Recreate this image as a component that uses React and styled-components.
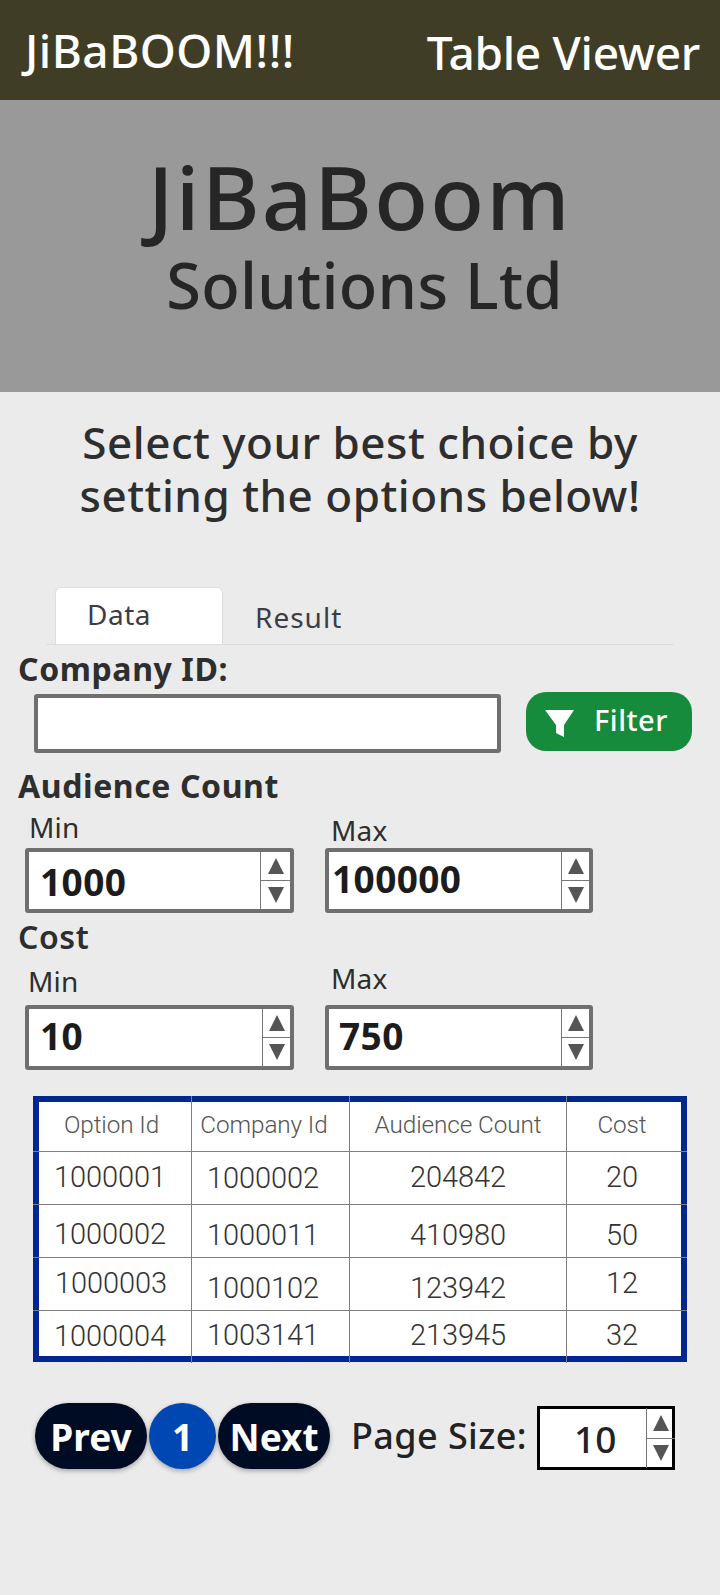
import React from 'react';
import styled, { createGlobalStyle } from 'styled-components';

const GlobalStyle = createGlobalStyle`
  html, body {
    margin: 0;
    padding: 0;
    background: #ebebeb;
  }
  body {
    font-family: "Noto Sans", "Open Sans", sans-serif;
    color: #2e2e2e;
  }
`;

const Page = styled.div`
  width: 720px;
  height: 1595px;
  overflow: hidden;
  background: #ebebeb;
`;

const TopBar = styled.div`
  display: flex;
  align-items: center;
  justify-content: space-between;
  height: 100px;
  padding: 0 20px 0 25px;
  box-sizing: border-box;
  background: #403d26;
  color: #ffffff;
`;

const Brand = styled.div`
  font-size: 46px;
  font-weight: 500;
  letter-spacing: 0.5px;
`;

const PageName = styled.div`
  font-size: 46px;
  font-weight: 500;
  letter-spacing: -0.3px;
  margin-top: 3px;
`;

const Hero = styled.div`
  display: flex;
  flex-direction: column;
  align-items: center;
  height: 292px;
  padding-top: 44px;
  box-sizing: border-box;
  background: #999999;
  color: #262626;
`;

const HeroTitle = styled.div`
  font-size: 88px;
  line-height: 105px;
  font-weight: 500;
  letter-spacing: 2.3px;
`;

const HeroSub = styled.div`
  margin-left: 9px;
  font-size: 63px;
  line-height: 72px;
  font-weight: 500;
  letter-spacing: 0.3px;
`;

const Lead = styled.div`
  margin-top: 24px;
  text-align: center;
  font-size: 44px;
  line-height: 53px;
  font-weight: 500;
  letter-spacing: 0.5px;
`;

const Tabs = styled.div`
  display: flex;
  height: 57px;
  margin: 65px 46px 0;
  padding-left: 9px;
  border-bottom: 1px solid #dddddd;
`;

const Tab = styled.div`
  box-sizing: border-box;
  width: ${(p) => p.$width}px;
  height: 57px;
  padding: ${(p) => p.$top}px 0 0 ${(p) => p.$left}px;
  font-size: 28px;
  line-height: 38px;
  font-weight: 400;
  letter-spacing: ${(p) => p.$spacing}px;
  color: #3c3c44;
  ${(p) => p.$active && `
    background: #ffffff;
    border: 1px solid #dddddd;
    border-bottom: none;
    border-radius: 6px 6px 0 0;
  `}
`;

const GroupLabel = styled.div`
  height: ${(p) => p.$height}px;
  padding-top: ${(p) => p.$top || 0}px;
  padding-left: 18px;
  font-size: 32px;
  line-height: ${(p) => p.$height}px;
  font-weight: ${(p) => p.$weight || 700};
  letter-spacing: 0.6px;
`;

const CompanyRow = styled.div`
  display: flex;
  align-items: flex-start;
  padding-left: 34px;
`;

const TextBox = styled.input`
  box-sizing: border-box;
  width: 467px;
  height: 59px;
  margin-top: 2px;
  padding: 0 8px;
  border: 4px solid #6f6f6f;
  border-radius: 3px;
  background: #ffffff;
  outline: none;
`;

const FilterButton = styled.button`
  display: flex;
  align-items: center;
  box-sizing: border-box;
  width: 166px;
  height: 59px;
  margin-left: 25px;
  padding: 0 0 4px 19px;
  border: none;
  border-radius: 20px;
  background: #168b3c;
  color: #ffffff;
  font-family: inherit;
  font-size: 29px;
  font-weight: 500;
  letter-spacing: 0.5px;
`;

const FilterIcon = styled.svg`
  width: 29px;
  height: 27px;
  margin: 8px 20px 0 0;
  fill: #ffffff;
`;

const RangeRow = styled.div`
  display: flex;
  align-items: flex-end;
  gap: 31px;
  height: ${(p) => p.$height}px;
  padding-left: 25px;
`;

const Field = styled.div`
  display: flex;
  flex-direction: column;
  width: ${(p) => p.$width}px;
`;

const FieldLabel = styled.div`
  height: 34px;
  margin-left: ${(p) => p.$left}px;
  margin-bottom: ${(p) => p.$gap}px;
  font-size: 28px;
  line-height: 34px;
  letter-spacing: 0.2px;
`;

const SpinBox = styled.div`
  display: flex;
  box-sizing: border-box;
  height: 65px;
  border: 4px solid #6f6f6f;
  border-radius: 3px;
  background: #ffffff;
`;

const SpinValue = styled.div`
  flex: 1;
  padding: ${(p) => p.$top}px 0 0 ${(p) => p.$left}px;
  font-size: 37px;
  line-height: 48px;
  font-weight: 700;
  letter-spacing: 0.4px;
  color: #1c1c1c;
`;

const Spinner = styled.div`
  display: flex;
  flex-direction: column;
  box-sizing: border-box;
  width: ${(p) => p.$width}px;
  border-left: 1px solid #777777;
`;

const SpinPart = styled.div`
  flex: 1;
  display: flex;
  align-items: center;
  justify-content: center;
  ${(p) => p.$up && 'border-bottom: 1px solid #777777;'}
`;

const Arrow = styled.div`
  width: 0;
  height: 0;
  border-left: 8px solid transparent;
  border-right: 8px solid transparent;
  ${(p) => (p.$up ? 'border-bottom: 16px solid #555555;' : 'border-top: 16px solid #555555;')}
`;

const Table = styled.div`
  box-sizing: border-box;
  width: 654px;
  height: 266px;
  margin: 26px 0 0 33px;
  border: 6px solid #00268f;
  background: #ffffff;
  font-family: Roboto, "Liberation Sans", sans-serif;
  font-weight: 300;
`;

const Row = styled.div`
  position: relative;
  display: grid;
  grid-template-columns: 153px 158px 217px 114px;
  height: ${(p) => p.$height}px;
  ${(p) => !p.$last && `
    &::after {
      content: "";
      position: absolute;
      left: -6px;
      right: -6px;
      bottom: 0;
      height: 1px;
      background: #808080;
    }
  `}
`;

const Cell = styled.div`
  position: relative;
  display: flex;
  align-items: center;
  justify-content: ${(p) => (p.$left ? 'flex-start' : 'center')};
  box-sizing: border-box;
  padding-left: ${(p) => p.$left || 0}px;
  padding-right: ${(p) => p.$right || 0}px;
  padding-top: ${(p) => (p.$dy > 0 ? p.$dy * 2 : 0)}px;
  padding-bottom: ${(p) => (p.$dy < 0 ? -p.$dy * 2 : 0)}px;
  font-size: 29px;
  letter-spacing: -0.1px;
  color: #333333;
  &:not(:last-child) {
    border-right: 1px solid #808080;
  }
  &:not(:last-child)::after {
    content: "";
    position: absolute;
    right: -1px;
    width: 1px;
    background: #808080;
    ${(p) => p.$edge === 'top' && 'top: -6px; height: 6px;'}
    ${(p) => p.$edge === 'bottom' && 'bottom: -6px; height: 6px;'}
  }
`;

const HeadCell = styled(Cell)`
  font-size: 24.3px;
  color: #555555;
`;

const Pagination = styled.div`
  display: flex;
  align-items: flex-start;
  margin: 41px 0 0 35px;
`;

const PageButton = styled.button`
  box-sizing: border-box;
  width: ${(p) => p.$width}px;
  height: 66px;
  margin-right: 2px;
  padding: 0;
  border: none;
  border-radius: 33px;
  background: ${(p) => (p.$active ? '#0047b3' : '#000c24')};
  box-shadow: 0 2px 5px rgba(0, 0, 0, 0.3);
  color: #ffffff;
  font-family: inherit;
  font-size: 37px;
  font-weight: 700;
`;

const PageSizeLabel = styled.div`
  margin-left: 19px;
  height: 66px;
  font-size: 36px;
  line-height: 66px;
  font-weight: 500;
  letter-spacing: 0.4px;
  color: #222222;
`;

const PageSizeBox = styled(SpinBox)`
  width: 138px;
  height: 64px;
  margin: 3px 0 0 10px;
  border: 3px solid #000000;
  border-radius: 0;
`;

const PageSizeValue = styled.div`
  flex: 1;
  padding-left: 34px;
  font-size: 37px;
  line-height: 60px;
  font-weight: 500;
  color: #222222;
`;

const PageSizeSpinner = styled(Spinner)`
  margin: -1px -3px -1px 0;
`;

const columns = [
  { name: 'Option Id', right: 7 },
  { name: 'Company Id', right: 13 },
  { name: 'Audience Count', right: 0 },
  { name: 'Cost', right: 4 },
];

const rows = [
  { height: 53, cells: [['1000001', 15, -2], ['1000002', 15, -1], ['204842', 0, -2], ['20', 0, -2]] },
  { height: 53, cells: [['1000002', 15, 2], ['1000011', 15, 3], ['410980', 0, 3], ['50', 0, 3]] },
  { height: 53, cells: [['1000003', 16, -2], ['1000102', 15, 3], ['123942', 0, 3], ['12', 0, -2]] },
  { height: 46, cells: [['1000004', 15, 2], ['1003141', 15, 1], ['213945', 0, 1], ['32', 0, 1]] },
];

function NumberField({ width = 269, label, labelLeft, labelGap, value, valueLeft, valueTop, spinWidth }) {
  return (
    <Field $width={width}>
      <FieldLabel $left={labelLeft} $gap={labelGap}>{label}</FieldLabel>
      <SpinBox>
        <SpinValue $left={valueLeft} $top={valueTop}>{value}</SpinValue>
        <Spinner $width={spinWidth}>
          <SpinPart $up><Arrow $up /></SpinPart>
          <SpinPart><Arrow /></SpinPart>
        </Spinner>
      </SpinBox>
    </Field>
  );
}

export default function App() {
  return (
    <Page>
      <GlobalStyle />
      <TopBar>
        <Brand>JiBaBOOM!!!</Brand>
        <PageName>Table Viewer</PageName>
      </TopBar>
      <Hero>
        <HeroTitle>JiBaBoom</HeroTitle>
        <HeroSub>Solutions Ltd</HeroSub>
      </Hero>
      <Lead>
        Select your best choice by
        <br />
        setting the options below!
      </Lead>
      <Tabs>
        <Tab $active $width={168} $left={31} $top={7} $spacing={0.5}>Data</Tab>
        <Tab $width={150} $left={32} $top={11} $spacing={1}>Result</Tab>
      </Tabs>
      <GroupLabel $height={47}>Company ID:</GroupLabel>
      <CompanyRow>
        <TextBox readOnly />
        <FilterButton>
          <FilterIcon viewBox="0 0 29 27">
            <path d="M0 0h29L19 15v12l-8-4V15z" />
          </FilterIcon>
          Filter
        </FilterButton>
      </CompanyRow>
      <GroupLabel $height={46} $top={10}>Audience Count</GroupLabel>
      <RangeRow $height={104}>
        <NumberField label="Min" labelLeft={4} labelGap={4} value="1000" valueLeft={11} valueTop={6} spinWidth={30} />
        <NumberField width={268} label="Max" labelLeft={6} labelGap={1} value="100000" valueLeft={3} valueTop={3} spinWidth={28} />
      </RangeRow>
      <GroupLabel $height={47} $weight={600}>Cost</GroupLabel>
      <RangeRow $height={110}>
        <NumberField label="Min" labelLeft={3} labelGap={7} value="10" valueLeft={11} valueTop={3} spinWidth={28} />
        <NumberField width={268} label="Max" labelLeft={6} labelGap={10} value="750" valueLeft={10} valueTop={3} spinWidth={28} />
      </RangeRow>
      <Table>
        <Row $height={50}>
          {columns.map((col) => (
            <HeadCell key={col.name} $right={col.right} $dy={-3} $edge="top">{col.name}</HeadCell>
          ))}
        </Row>
        {rows.map((row, i) => (
          <Row key={row.cells[0][0]} $height={row.height} $last={i === rows.length - 1}>
            {row.cells.map(([text, left, dy], c) => (
              <Cell
                key={text}
                $left={left}
                $right={c === 3 ? 4 : 0}
                $dy={dy}
                $edge={i === rows.length - 1 ? 'bottom' : undefined}
              >
                {text}
              </Cell>
            ))}
          </Row>
        ))}
      </Table>
      <Pagination>
        <PageButton $width={112}>Prev</PageButton>
        <PageButton $width={67} $active>1</PageButton>
        <PageButton $width={112}>Next</PageButton>
        <PageSizeLabel>Page Size:</PageSizeLabel>
        <PageSizeBox>
          <PageSizeValue>10</PageSizeValue>
          <PageSizeSpinner $width={29}>
            <SpinPart $up><Arrow $up /></SpinPart>
            <SpinPart><Arrow /></SpinPart>
          </PageSizeSpinner>
        </PageSizeBox>
      </Pagination>
    </Page>
  );
}
